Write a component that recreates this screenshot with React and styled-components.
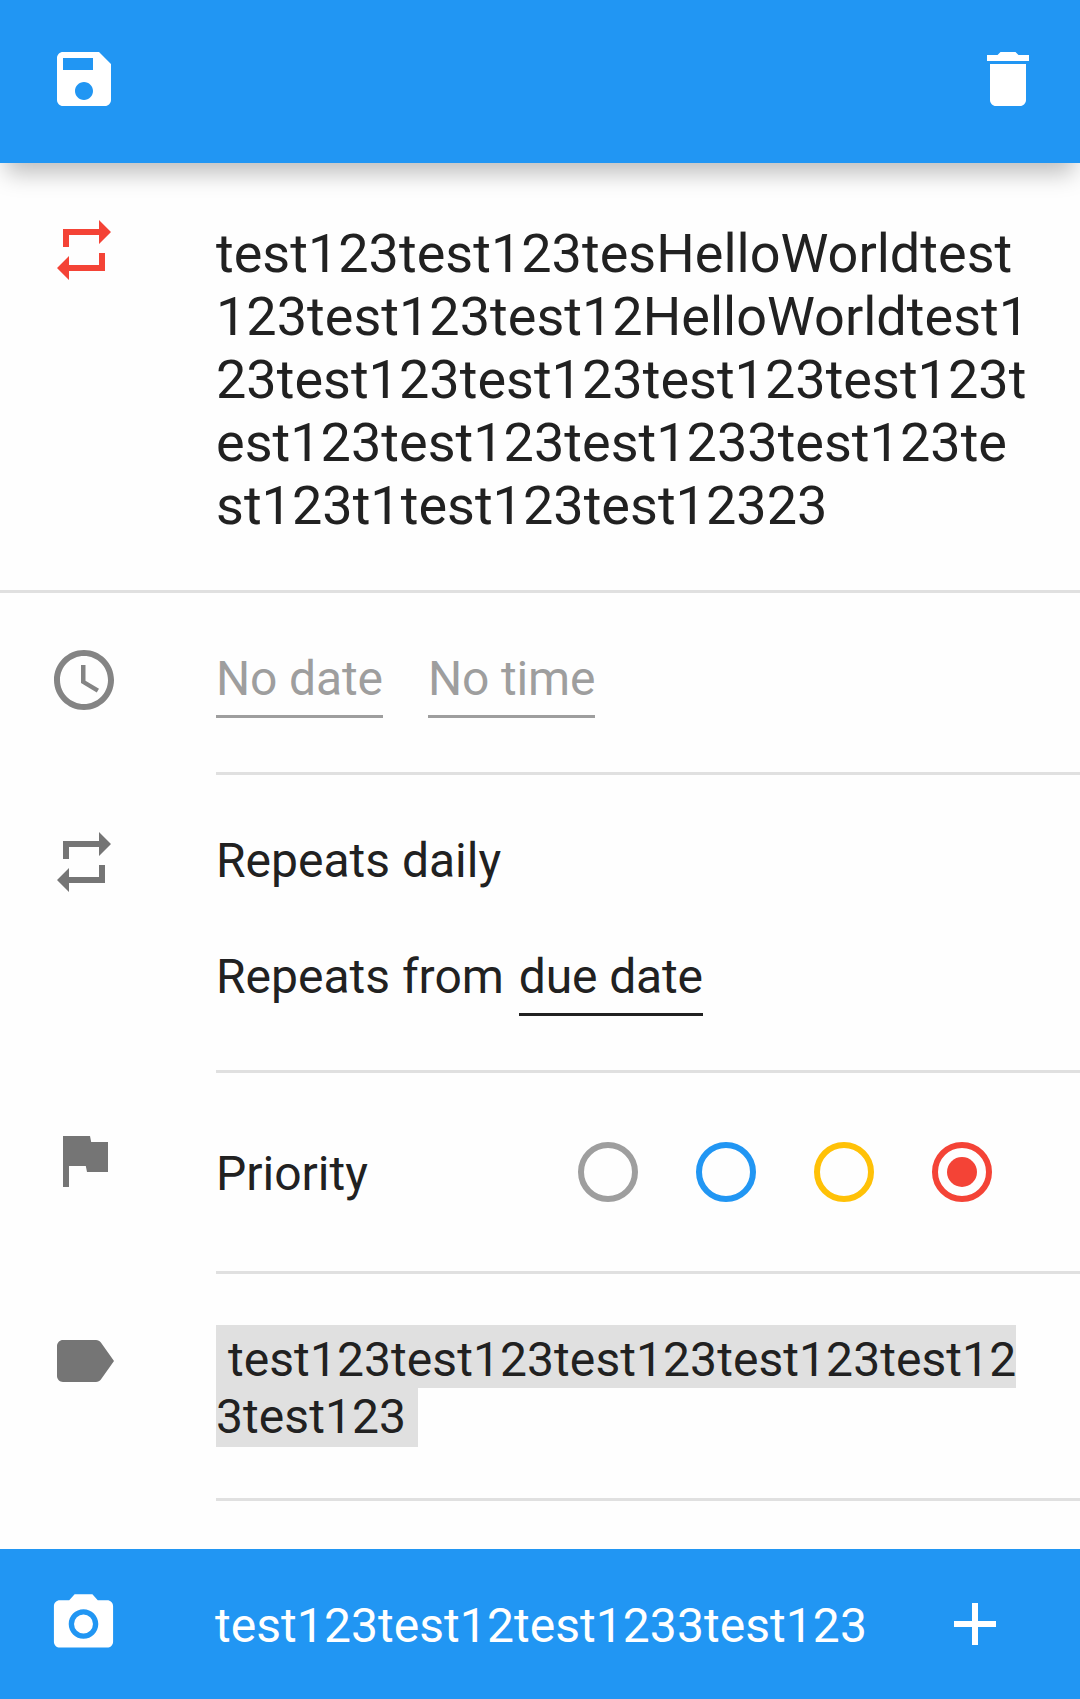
import React from 'react';
import styled, { createGlobalStyle } from 'styled-components';

const GlobalStyle = createGlobalStyle`
  *, *::before, *::after { box-sizing: border-box; }
  body {
    margin: 0;
    background: #fefefe;
    color: #212121;
    font-family: Roboto, "Noto Sans", sans-serif;
    font-size: 48px;
    line-height: 57px;
  }
`;

const Screen = styled.div`
  display: flex;
  flex-direction: column;
  width: 1080px;
  height: 1699px;
  overflow: hidden;
  background: #fefefe;
`;

const Toolbar = styled.header`
  display: flex;
  flex: none;
  justify-content: space-between;
  align-items: flex-start;
  height: 163px;
  padding: 43px 36px 0 48px;
  background: #2196f3;
  box-shadow: 0 16px 22px -6px rgba(0, 0, 0, 0.26);
  color: #fff;
`;

const IconButton = styled.button`
  display: flex;
  flex: none;
  margin: 0;
  padding: 0;
  border: 0;
  background: none;
  color: inherit;
`;

const Glyph = styled.svg`
  display: block;
  flex: none;
  width: ${(p) => p.$size || 72}px;
  height: ${(p) => p.$size || 72}px;
  fill: currentColor;
`;

const Row = styled.section`
  display: flex;
  flex: none;
  height: ${(p) => p.$height}px;
  border-bottom: ${(p) => (p.$full ? '3px solid #e0e0e0' : '0')};
`;

const RowIcon = styled.div`
  flex: none;
  width: 216px;
  padding: 51px 0 0 48px;
  color: ${(p) => p.$color || '#757575'};
`;

const RowBody = styled.div`
  flex: 1;
  min-width: 0;
  padding-top: ${(p) => p.$top ?? 57}px;
  border-bottom: ${(p) => (p.$line ? '3px solid #e0e0e0' : '0')};
`;

const Title = styled.h1`
  margin: 0;
  font-size: 54px;
  font-weight: 400;
  line-height: 63px;
  letter-spacing: 0.015px;
  white-space: pre;
`;

const Inline = styled.div`
  display: flex;
  align-items: flex-start;
  gap: ${(p) => p.$gap || 0}px;
  margin-top: ${(p) => p.$top || 0}px;
  white-space: pre;
`;

const Picker = styled.span`
  padding-bottom: 8px;
  border-bottom: 3px solid currentColor;
  color: ${(p) => (p.$empty ? '#9e9e9e' : '#212121')};
  letter-spacing: -0.14px;
`;

const PriorityBody = styled(RowBody)`
  display: flex;
  justify-content: space-between;
  align-items: flex-start;
  padding: 69px 88px 0 0;
`;

const PriorityLabel = styled.span`
  padding-top: 3px;
`;

const Radios = styled.div`
  display: flex;
  gap: 58px;
`;

const Radio = styled.span`
  display: flex;
  align-items: center;
  justify-content: center;
  width: 60px;
  height: 60px;
  border: 6px solid ${(p) => p.$color};
  border-radius: 50%;

  &::after {
    content: '';
    display: ${(p) => (p.$checked ? 'block' : 'none')};
    width: 30px;
    height: 30px;
    border-radius: 50%;
    background: ${(p) => p.$color};
  }
`;

const Tag = styled.div`
  display: flex;
  flex-direction: column;
  align-items: flex-start;
  letter-spacing: 0.07px;
  white-space: pre;
`;

const TagLine = styled.span`
  padding: ${(p) => p.$pad};
  background: #e0e0e0;
`;

const BottomBar = styled.footer`
  display: flex;
  flex: none;
  align-items: flex-start;
  height: 150px;
  margin-top: 48px;
  padding: 39px 69px 0 48px;
  background: #2196f3;
  color: #fff;
`;

const Comment = styled.span`
  flex: 1;
  padding: 9px 0 0 96px;
  letter-spacing: 0.06px;
`;

const PATHS = {
  save: 'M17 3H5c-1.11 0-2 .9-2 2v14c0 1.1.89 2 2 2h14c1.1 0 2-.9 2-2V7l-4-4zm-5 16c-1.66 0-3-1.34-3-3s1.34-3 3-3 3 1.34 3 3-1.34 3-3 3zm3-10H5V5h10v4z',
  trash: 'M6 19c0 1.1.9 2 2 2h8c1.1 0 2-.9 2-2V7H6v12zM19 4h-3.5l-1-1h-5l-1 1H5v2h14V4z',
  repeat: 'M7 7h10v3l4-4-4-4v3H5v6h2V7zm10 10H7v-3l-4 4 4 4v-3h12v-6h-2v4z',
  flag: 'M14.4 6L14 4H5v17h2v-7h5.6l.4 2h7V6z',
  label: 'M17.63 5.84C17.27 5.33 16.67 5 16 5L5 5.01C3.9 5.01 3 5.9 3 7v10c0 1.1.9 1.99 2 1.99L16 19c.67 0 1.27-.33 1.63-.84L22 12l-4.37-6.16z',
  camera: 'M9 2.15L7.17 4.15H4c-1.1 0-2 .9-2 2v12c0 1.1.9 2 2 2h16c1.1 0 2-.9 2-2v-12c0-1.1-.9-2-2-2h-3.17L15 2.15H9zm3 15c-2.76 0-5-2.24-5-5s2.24-5 5-5 5 2.24 5 5-2.24 5-5 5zM12 8.95a3.2 3.2 0 1 0 0 6.4 3.2 3.2 0 0 0 0-6.4z',
  clock: 'M11.99 2C6.47 2 2 6.48 2 12s4.47 10 9.99 10C17.52 22 22 17.52 22 12S17.52 2 11.99 2zM12 20c-4.42 0-8-3.58-8-8s3.58-8 8-8 8 3.58 8 8-3.58 8-8 8zM12.5 7H11v6l5.25 3.15.75-1.23-4.5-2.67z',
  plus: 'M19 13h-6v6h-2v-6H5v-2h6V5h2v6h6v2z',
};

function Icon({ name, size }) {
  return (
    <Glyph viewBox="0 0 24 24" $size={size} aria-hidden="true">
      <path d={PATHS[name]} />
    </Glyph>
  );
}

const TITLE = [
  'test123test123tesHelloWorldtest',
  '123test123test12HelloWorldtest1',
  '23test123test123test123test123t',
  'est123test123test1233test123te',
  'st123t1test123test12323',
].join('\n');

const PRIORITIES = [
  { color: '#9e9e9e' },
  { color: '#2196f3' },
  { color: '#ffc107' },
  { color: '#f44336', checked: true },
];

export default function App() {
  return (
    <>
      <GlobalStyle />
      <Screen>
        <Toolbar>
          <IconButton aria-label="Save"><Icon name="save" /></IconButton>
          <IconButton aria-label="Delete"><Icon name="trash" /></IconButton>
        </Toolbar>

        <Row $height={430} $full>
          <RowIcon $color="#f44336"><Icon name="repeat" /></RowIcon>
          <RowBody $top={59}><Title>{TITLE}</Title></RowBody>
        </Row>

        <Row $height={182}>
          <RowIcon $color="#848484"><Icon name="clock" /></RowIcon>
          <RowBody $line>
            <Inline $gap={45}>
              <Picker $empty>No date</Picker>
              <Picker $empty>No time</Picker>
            </Inline>
          </RowBody>
        </Row>

        <Row $height={298}>
          <RowIcon><Icon name="repeat" /></RowIcon>
          <RowBody $line>
            <Inline>Repeats daily</Inline>
            <Inline $top={59} $gap={3}>
              <span>{'Repeats from '}</span>
              <Picker>due date</Picker>
            </Inline>
          </RowBody>
        </Row>

        <Row $height={201}>
          <RowIcon><Icon name="flag" /></RowIcon>
          <PriorityBody $line>
            <PriorityLabel>Priority</PriorityLabel>
            <Radios>
              {PRIORITIES.map((p) => (
                <Radio key={p.color} $color={p.color} $checked={p.checked} />
              ))}
            </Radios>
          </PriorityBody>
        </Row>

        <Row $height={227}>
          <RowIcon><Icon name="label" /></RowIcon>
          <RowBody $top={51} $line>
            <Tag>
              <TagLine $pad="6px 0 0">{' test123test123test123test123test12'}</TagLine>
              <TagLine $pad="0 0 2px">{'3test123 '}</TagLine>
            </Tag>
          </RowBody>
        </Row>

        <BottomBar>
          <IconButton aria-label="Attach picture"><Icon name="camera" size={71} /></IconButton>
          <Comment>test123test12test1233test123</Comment>
          <IconButton aria-label="Add"><Icon name="plus" /></IconButton>
        </BottomBar>
      </Screen>
    </>
  );
}
